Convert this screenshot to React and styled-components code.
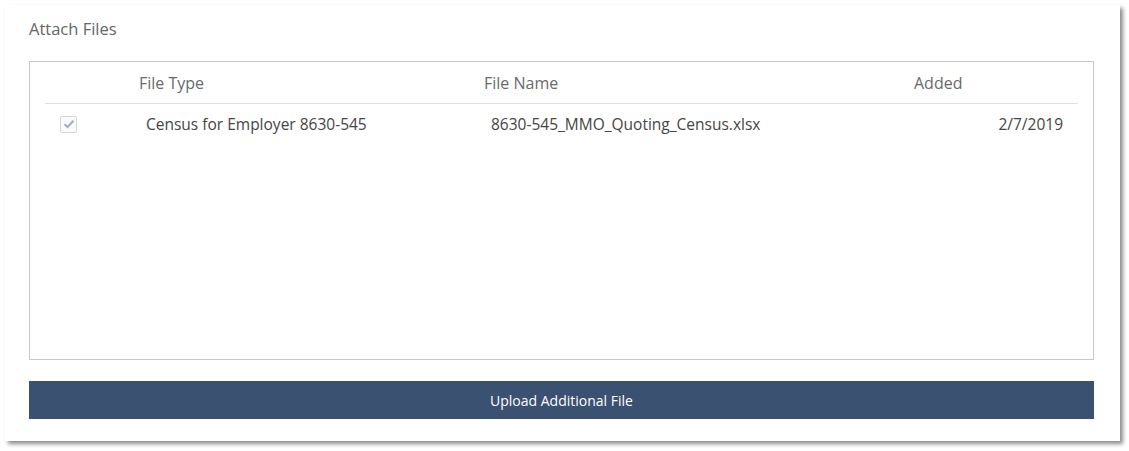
import React from 'react'
import styled, { createGlobalStyle } from 'styled-components'

const GlobalStyle = createGlobalStyle`
    body {
        margin: 0;
        background: #fff;
        font-family: "Open Sans", "Liberation Sans", sans-serif;
    }
`

const Page = styled.div`
    padding: 5px 0 10px 5px;
`

const Panel = styled.section`
    width: 1115px;
    height: 436px;
    box-sizing: border-box;
    background: #fff;
    box-shadow: 3px 3px 4px rgba(0, 0, 0, 0.45);
    padding: 13px 26px 0 24px;
    display: flex;
    flex-direction: column;
`

const Title = styled.h2`
    margin: 0;
    font-size: 16.5px;
    font-weight: 400;
    color: #666;
    line-height: 22px;
`

const FilesBox = styled.div`
    margin-top: 21px;
    height: 299px;
    box-sizing: border-box;
    border: 1px solid #c8c8c8;
    padding: 0 15px;
`

const Row = styled.div`
    display: grid;
    grid-template-columns: 87px 345px 430px 1fr;
    align-items: center;
    height: ${p => p.$header ? '41px' : '40px'};
    border-bottom: ${p => p.$header ? '1px solid #e0e0e0' : 'none'};
`

const HeadCell = styled.div`
    padding-left: 7px;
    font-size: 16px;
    color: #6a6a6a;
    padding-top: 1px;
`

const Cell = styled.div`
    padding-left: ${p => p.$right ? '0' : '14px'};
    padding-right: ${p => p.$right ? '15px' : '0'};
    text-align: ${p => p.$right ? 'right' : 'left'};
    font-size: 15.5px;
    color: #454545;
`

const Check = styled.span`
    display: flex;
    align-items: center;
    justify-content: center;
    margin-left: 15px;
    width: 17px;
    height: 17px;
    box-sizing: border-box;
    border: 1px solid #d6d6d6;
    border-radius: 2px;
    background: #fafafa;
`

const UploadButton = styled.button`
    margin-top: 21px;
    height: 38px;
    width: 100%;
    border: none;
    background: #3b5171;
    color: #fff;
    font-family: inherit;
    font-size: 14px;
    font-weight: 500;
    cursor: pointer;
`

const files = [
    { type: 'Census for Employer 8630-545', name: '8630-545_MMO_Quoting_Census.xlsx', added: '2/7/2019' },
]

export default function App() {
    return (
        <>
            <GlobalStyle />
            <Page>
                <Panel>
                    <Title>Attach Files</Title>
                    <FilesBox>
                        <Row $header>
                            <div />
                            <HeadCell>File Type</HeadCell>
                            <HeadCell>File Name</HeadCell>
                            <HeadCell>Added</HeadCell>
                        </Row>
                        {files.map(f => (
                            <Row key={f.name}>
                                <div>
                                    <Check>
                                        <svg width="12" height="10" viewBox="0 0 12 10">
                                            <path d="M1.5 5.2 L4.5 8 L10.5 1.8" fill="none" stroke="#a9b0bd" strokeWidth="2.2" />
                                        </svg>
                                    </Check>
                                </div>
                                <Cell>{f.type}</Cell>
                                <Cell>{f.name}</Cell>
                                <Cell $right>{f.added}</Cell>
                            </Row>
                        ))}
                    </FilesBox>
                    <UploadButton>Upload Additional File</UploadButton>
                </Panel>
            </Page>
        </>
    )
}
